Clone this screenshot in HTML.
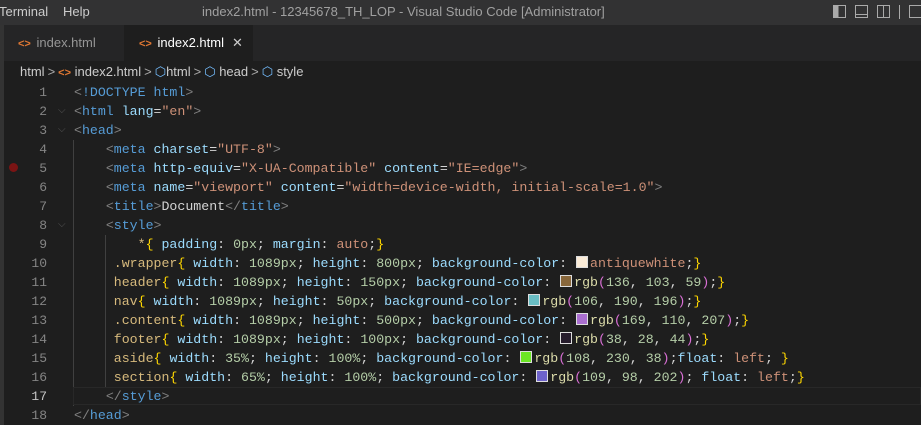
<!DOCTYPE html>
<html><head><style>
body{margin:0;width:921px;height:425px;overflow:hidden;background:#1e1e1e;font-family:"Liberation Sans","DejaVu Sans",sans-serif;position:relative}
.menu{position:absolute;left:0;top:0;width:921px;height:25px;background:#323233;color:#ccc;font-size:13px}
.menu span{position:absolute;top:4px}
.title{color:#a0a0a0}
.tabs{position:absolute;left:4px;top:25px;width:917px;height:36px;background:#252526}
.tab{position:absolute;top:0;height:36px;font-size:13px;line-height:36px}
.lt{position:absolute;left:0;top:25px;width:4px;height:400px;background:#333}
.bc{position:absolute;left:4px;top:61px;width:917px;height:22px;color:#ccc;font-size:13px;line-height:22px}
.code{position:absolute;left:0;top:83px;width:921px;font-family:"Liberation Mono",monospace;font-size:13.25px}
.ln{height:19px;line-height:19px;position:relative;white-space:pre}
.num{position:absolute;right:874px;color:#858585;text-align:right;font-size:13px}
.txt{position:absolute;left:74px;color:#d4d4d4}
.b{color:#808080}.t{color:#569cd6}.a{color:#9cdcfe}.s{color:#ce9178}.sel{color:#d7ba7d}.n{color:#b5cea8}.y{color:#ffd700}.m{color:#da70d6}.f{color:#dcdcaa}.w{color:#d4d4d4}
.sw{display:inline-block;width:10px;height:10px;border:1px solid #ddd;margin:0 2px 0 1px;vertical-align:-1px}
.chev{position:absolute;left:58px;color:#555;font-size:10px}
.guide{position:absolute;width:1px;background:#404040}
.ic{color:#e37933;font-weight:bold;font-size:11px}
.cube{color:#75beff}
.gt{color:#aaa;margin:0 3px}
</style></head><body>
<div class="menu"><span style="left:-1px">Terminal</span><span style="left:63px">Help</span><span class="title" style="left:202px">index2.html - 12345678_TH_LOP - Visual Studio Code [Administrator]</span>
<svg style="position:absolute;left:833px;top:5px" width="90" height="14" fill="none" stroke="#aaa" stroke-width="1">
<rect x="0.5" y="0.5" width="12" height="12"/><rect x="1" y="1" width="4" height="11" fill="#aaa"/>
<rect x="22.5" y="0.5" width="12" height="12"/><line x1="22" y1="9.5" x2="35" y2="9.5"/>
<rect x="44.5" y="0.5" width="12" height="12"/><line x1="50.5" y1="0" x2="50.5" y2="13"/>
<line x1="66.5" y1="0" x2="66.5" y2="14"/><rect x="76.5" y="0.5" width="12" height="12"/></svg></div>
<div class="lt"></div>
<div class="tabs">
<div class="tab" style="left:0;width:119px;color:#969696"><span class="ic" style="margin-left:14px">&lt;&gt;</span> <span style="margin-left:2px">index.html</span></div>
<div class="tab" style="left:120px;width:129px;background:#1e1e1e;color:#fff"><span class="ic" style="margin-left:15px">&lt;&gt;</span> <span style="margin-left:2px">index2.html</span><span style="margin-left:8px;color:#ccc">✕</span></div>
</div>
<div class="bc"><span style="margin-left:16px">html</span><span class="gt">&gt;</span><span class="ic">&lt;&gt;</span> index2.html<span class="gt">&gt;</span><span class="cube">⬡</span>html<span class="gt">&gt;</span><span class="cube">⬡</span> head<span class="gt">&gt;</span><span class="cube">⬡</span> style</div>
<div class="guide" style="left:73px;top:140px;height:266px"></div>
<div class="guide" style="left:105px;top:235px;height:152px"></div>
<div style="position:absolute;left:73px;top:387px;width:848px;height:18px;border:1px solid #282828;box-sizing:border-box"></div>
<div style="position:absolute;left:9px;top:163px;width:9px;height:9px;border-radius:50%;background:#7a1414"></div>
<div class="code">
<div class="ln"><span class="num">1</span><span class="txt"><span class="b">&lt;</span><span class="t">!DOCTYPE html</span><span class="b">&gt;</span></span></div>
<div class="ln"><span class="num">2</span><span class="chev">⌵</span><span class="txt"><span class="b">&lt;</span><span class="t">html</span> <span class="a">lang</span>=<span class="s">"en"</span><span class="b">&gt;</span></span></div>
<div class="ln"><span class="num">3</span><span class="chev">⌵</span><span class="txt"><span class="b">&lt;</span><span class="t">head</span><span class="b">&gt;</span></span></div>
<div class="ln"><span class="num">4</span><span class="txt">    <span class="b">&lt;</span><span class="t">meta</span> <span class="a">charset</span>=<span class="s">"UTF-8"</span><span class="b">&gt;</span></span></div>
<div class="ln"><span class="num">5</span><span class="txt">    <span class="b">&lt;</span><span class="t">meta</span> <span class="a">http-equiv</span>=<span class="s">"X-UA-Compatible"</span> <span class="a">content</span>=<span class="s">"IE=edge"</span><span class="b">&gt;</span></span></div>
<div class="ln"><span class="num">6</span><span class="txt">    <span class="b">&lt;</span><span class="t">meta</span> <span class="a">name</span>=<span class="s">"viewport"</span> <span class="a">content</span>=<span class="s">"width=device-width, initial-scale=1.0"</span><span class="b">&gt;</span></span></div>
<div class="ln"><span class="num">7</span><span class="txt">    <span class="b">&lt;</span><span class="t">title</span><span class="b">&gt;</span>Document<span class="b">&lt;/</span><span class="t">title</span><span class="b">&gt;</span></span></div>
<div class="ln"><span class="num">8</span><span class="chev">⌵</span><span class="txt">    <span class="b">&lt;</span><span class="t">style</span><span class="b">&gt;</span></span></div>
<div class="ln"><span class="num">9</span><span class="txt">        <span class="sel">*</span><span class="y">{</span> <span class="a">padding</span>: <span class="n">0px</span>; <span class="a">margin</span>: <span class="s">auto</span>;<span class="y">}</span></span></div>
<div class="ln"><span class="num">10</span><span class="txt">     <span class="sel">.wrapper</span><span class="y">{</span> <span class="a">width</span>: <span class="n">1089px</span>; <span class="a">height</span>: <span class="n">800px</span>; <span class="a">background-color</span>: <span class="sw" style="background:antiquewhite"></span><span class="s">antiquewhite</span>;<span class="y">}</span></span></div>
<div class="ln"><span class="num">11</span><span class="txt">     <span class="sel">header</span><span class="y">{</span> <span class="a">width</span>: <span class="n">1089px</span>; <span class="a">height</span>: <span class="n">150px</span>; <span class="a">background-color</span>: <span class="sw" style="background:rgb(136,103,59)"></span><span class="f">rgb</span><span class="m">(</span><span class="n">136</span>, <span class="n">103</span>, <span class="n">59</span><span class="m">)</span>;<span class="y">}</span></span></div>
<div class="ln"><span class="num">12</span><span class="txt">     <span class="sel">nav</span><span class="y">{</span> <span class="a">width</span>: <span class="n">1089px</span>; <span class="a">height</span>: <span class="n">50px</span>; <span class="a">background-color</span>: <span class="sw" style="background:rgb(106,190,196)"></span><span class="f">rgb</span><span class="m">(</span><span class="n">106</span>, <span class="n">190</span>, <span class="n">196</span><span class="m">)</span>;<span class="y">}</span></span></div>
<div class="ln"><span class="num">13</span><span class="txt">     <span class="sel">.content</span><span class="y">{</span> <span class="a">width</span>: <span class="n">1089px</span>; <span class="a">height</span>: <span class="n">500px</span>; <span class="a">background-color</span>: <span class="sw" style="background:rgb(169,110,207)"></span><span class="f">rgb</span><span class="m">(</span><span class="n">169</span>, <span class="n">110</span>, <span class="n">207</span><span class="m">)</span>;<span class="y">}</span></span></div>
<div class="ln"><span class="num">14</span><span class="txt">     <span class="sel">footer</span><span class="y">{</span> <span class="a">width</span>: <span class="n">1089px</span>; <span class="a">height</span>: <span class="n">100px</span>; <span class="a">background-color</span>: <span class="sw" style="background:rgb(38,28,44)"></span><span class="f">rgb</span><span class="m">(</span><span class="n">38</span>, <span class="n">28</span>, <span class="n">44</span><span class="m">)</span>;<span class="y">}</span></span></div>
<div class="ln"><span class="num">15</span><span class="txt">     <span class="sel">aside</span><span class="y">{</span> <span class="a">width</span>: <span class="n">35%</span>; <span class="a">height</span>: <span class="n">100%</span>; <span class="a">background-color</span>: <span class="sw" style="background:rgb(108,230,38)"></span><span class="f">rgb</span><span class="m">(</span><span class="n">108</span>, <span class="n">230</span>, <span class="n">38</span><span class="m">)</span>;<span class="a">float</span>: <span class="s">left</span>; <span class="y">}</span></span></div>
<div class="ln"><span class="num">16</span><span class="txt">     <span class="sel">section</span><span class="y">{</span> <span class="a">width</span>: <span class="n">65%</span>; <span class="a">height</span>: <span class="n">100%</span>; <span class="a">background-color</span>: <span class="sw" style="background:rgb(109,98,202)"></span><span class="f">rgb</span><span class="m">(</span><span class="n">109</span>, <span class="n">98</span>, <span class="n">202</span><span class="m">)</span>; <span class="a">float</span>: <span class="s">left</span>;<span class="y">}</span></span></div>
<div class="ln"><span class="num" style="color:#c6c6c6">17</span><span class="txt">    <span class="b">&lt;/</span><span class="t">style</span><span class="b">&gt;</span></span></div>
<div class="ln"><span class="num">18</span><span class="txt"><span class="b">&lt;/</span><span class="t">head</span><span class="b">&gt;</span></span></div>
</div>
</body></html>
